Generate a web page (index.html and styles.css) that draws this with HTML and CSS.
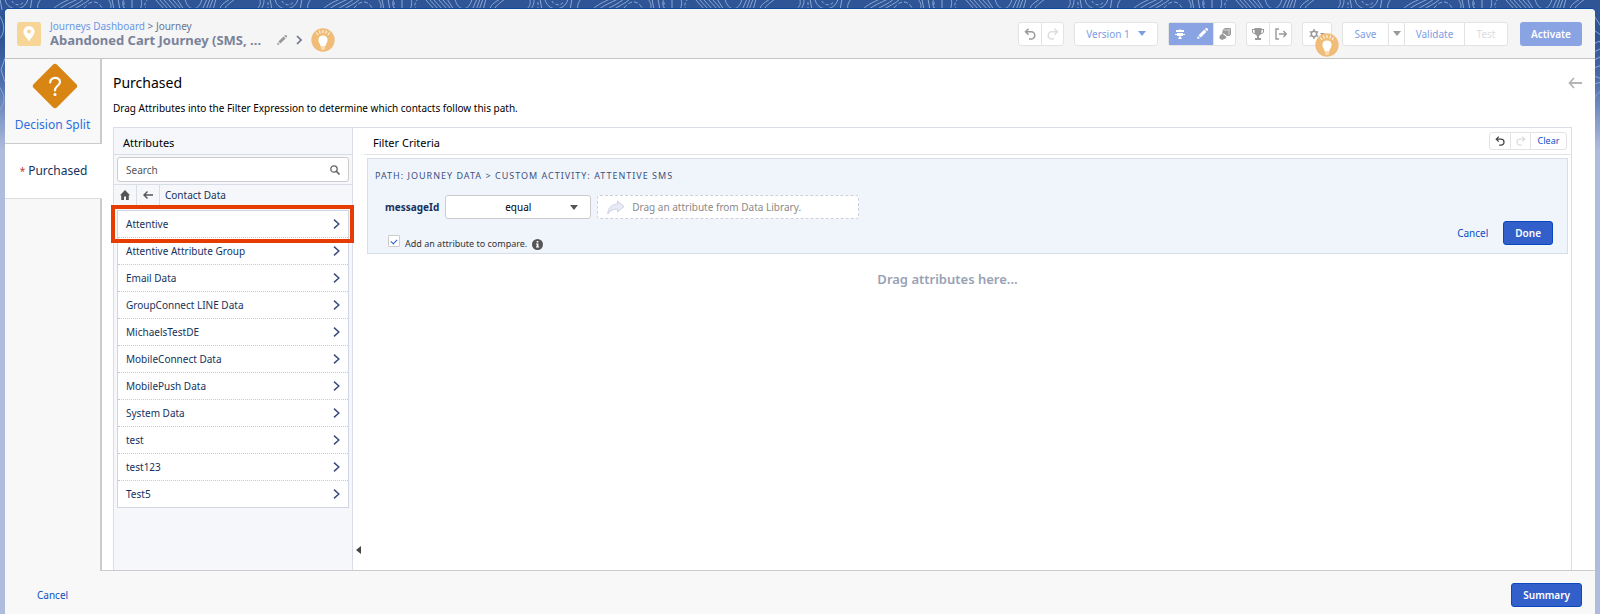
FILE: index.html
```html
<!DOCTYPE html>
<html lang="en">
<head>
  <meta charset="UTF-8">
  <title>Journey Builder</title>
  <link rel="stylesheet" href="styles.css">
</head>
<body>
<svg class="backdrop" aria-hidden="true">
  <defs>
    <pattern id="topo" x="30" width="270" height="10" patternUnits="userSpaceOnUse">
      <g fill="none" stroke="#8aa6d2" stroke-width="1">
        <path d="M0 10 2-1M8 10C7 6 8 3 11-1M22 10C28 4 34 2 40-1M28 10C34 5 40 3 48-1M36 10C42 6 48 4 54-1M43 10C48 6 55 4 60-1"/>
        <path d="M54 8C60 0 68 0 72 8" stroke-dasharray="4 2"/>
        <path d="M80 10C82 6 81 3 78-1M84 10 82-1M90 10 88-1M97 10C92 7 92 3 94-1M102 10V-1M110 10C112 5 112 2 111-1"/>
        <path d="M94 10V-1M117 10C114 6 114 3 118-1" stroke-dasharray="3 2"/>
        <path d="M125-1 135 10M129-1 139 10M133-1 143 10M138-1 148 10M142-1 152 10M147-1 154 10"/>
        <path d="M155-1C158 12 169 12 172-1M172 10 177-1M176 10 180-1M179 10 183-1M183 10 186-1"/>
        <path d="M190 10C190 5 194 3 200-1M194 10C196 5 200 3 205-1M225 10C232 6 230 2 230-1M230 10C234 6 234 2 234-1"/>
        <path d="M238 10V-1M252 1C254 6 262 6 264 1" stroke-dasharray="3 2"/>
        <path d="M245-1C247 12 265 12 268-1M242 10C241 6 241 3 240-1"/>
      </g>
    </pattern>
  </defs>
  <rect width="100%" height="10" fill="url(#topo)"/>
  <path fill="none" stroke="#8aa6d2" d="M-2 14C5 22 6 34-2 40M5 58 1 70 5 82M-2 84C2 92 8 98 0 110M-2 118C6 118 6 134-2 134"/>
  <svg x="100%" width="1" height="160" overflow="visible">
    <path fill="none" stroke="#8aa6d2" d="M-10 10C-4 18-2 22 2 28M-6 30 2 36M-6 44-1 41 2 45M-6 52 2 48M-6 60 2 56M-6 68 2 65M-6 76 2 79M-6 84 2 82M-6 100C-4 94-1 92 2 91M-6 122C-2 118-2 126 2 130"/>
  </svg>
</svg>

<div class="window">
  <header class="topbar">
    <span class="app-icon">
      <svg width="12" height="16" viewBox="0 0 12 16"><path fill="#fff" fill-rule="evenodd" d="M6 0a5.600 5.600 0 0 1 5.600 5.600C11.600 9 8 12 6 15.500 4 12 .4 9 .4 5.600A5.600 5.600 0 0 1 6 0zm0 3.600a2 2 0 1 0 0 4 2 2 0 0 0 0-4z"/></svg>
    </span>
    <div class="titles">
      <nav class="crumbs"><a href="#">Journeys Dashboard</a> &gt; Journey</nav>
      <div class="title-row">
        <h1>Abandoned Cart Journey (SMS, ...</h1>
        <button class="plain pencil" aria-label="Rename">
          <svg width="10" height="10" viewBox="0 0 10 10"><use href="#pencil"/></svg>
        </button>
        <svg width="6" height="10" viewBox="0 0 6 10"><path fill="none" stroke="#6b7590" stroke-width="1.600" d="M1 1 5 5 1 9"/></svg>
        <button class="plain" aria-label="Tips"><svg width="24" height="24" viewBox="0 0 24 24"><use href="#bulb"/></svg></button>
      </div>
    </div>

    <div class="toolbar">
      <div class="group">
        <button aria-label="Undo"><svg width="12" height="12" viewBox="0 0 12 12"><use href="#undo"/></svg></button>
        <button class="faded" aria-label="Redo"><svg class="flip" width="12" height="12" viewBox="0 0 12 12"><use href="#undo"/></svg></button>
      </div>
      <div class="group">
        <button class="version">Version 1 <span class="caret"></span></button>
      </div>
      <div class="group">
        <button class="on" aria-label="Path view"><svg width="10" height="10" viewBox="0 0 10 10"><path fill="currentColor" d="M1 1h3.500V0h1v1H9v2H1zM0 5h2V4h6v1h2v1H8v1H2V6H0zM4.500 7h1v1l1 .5V10h-3V8.500l1-.5z"/></svg></button>
        <button class="on" aria-label="Edit"><svg width="11" height="11" viewBox="0 0 10 10"><use href="#pencil"/></svg></button>
        <button aria-label="Copy"><svg width="12" height="12" viewBox="0 0 12 12"><path fill="currentColor" d="M4 1.500 6 0h6v6.500L10.500 8H8L5 5.500H3z"/><path fill="currentColor" d="m3.500 5.500 4 3.500-1 1.500L3 12 .5 10.500V8z"/><path fill="none" stroke="#fff" stroke-width=".6" d="M4.500 2H10v5.500M10 2l1.500-1.500"/></svg></button>
      </div>
      <div class="group">
        <button aria-label="Goals"><svg width="12" height="12" viewBox="0 0 12 12"><path fill="currentColor" fill-rule="evenodd" d="M2.500 0h7v1H12v2.500C12 5 10.500 6 9 6 8.500 7 7.500 7.500 7 7.700V10h2v2H3v-2h2V7.700C4.500 7.500 3.500 7 3 6 1.500 6 0 5 0 3.500V1h2.500zM1 2v1.500C1 4.500 2 5 2.700 5L2.500 2zm8.500 0-.2 3C10 5 11 4.500 11 3.500V2z"/></svg></button>
        <button aria-label="Exit criteria"><svg width="12" height="12" viewBox="0 0 12 12"><path fill="none" stroke="currentColor" stroke-width="1.400" d="M4 1H1v10h3M4 6h7M8.500 3 11.300 6 8.500 9"/></svg></button>
      </div>
      <div class="group settings">
        <button aria-label="Settings"><svg width="16" height="10" viewBox="0 0 16 10"><circle cx="5" cy="5" r="2.700" fill="none" stroke="currentColor" stroke-width="1.500"/><path stroke="currentColor" stroke-width="1.400" d="M5 0v2M5 8v2M.7 2.500l1.700 1M7.600 6.500l1.700 1M.7 7.500l1.700-1M7.600 3.500l1.700-1"/><path fill="currentColor" d="M11 4h5l-2.500 3z"/></svg></button>
        <svg class="over" width="24" height="24" viewBox="0 0 24 24"><use href="#bulb"/></svg>
      </div>
      <div class="group">
        <button class="save">Save</button>
        <button class="more" aria-label="More save options"><span class="caret"></span></button>
        <button class="validate">Validate</button>
        <button class="test" disabled>Test</button>
      </div>
      <button class="activate">Activate</button>
    </div>
  </header>

  <div class="body">
    <aside class="steps">
      <a class="step split" href="#">
        <svg width="48" height="48" viewBox="0 0 48 48"><rect x="7.500" y="7.500" width="33" height="33" rx="3" fill="#d98514" transform="rotate(45 24 24)"/><path fill="none" stroke="#fff" stroke-width="2.200" stroke-linecap="round" d="M19.200 20.500c0-6 9.800-6 9.800-.5 0 4-5 3.600-5 8.400"/><circle cx="24" cy="32.500" r="1.500" fill="#fff"/></svg>
        Decision Split
      </a>
      <a class="step current" href="#"><span class="req">*</span> Purchased</a>
    </aside>

    <main class="content">
      <div class="heading">
        <h2>Purchased</h2>
        <button class="plain" aria-label="Collapse"><svg width="14" height="12" viewBox="0 0 14 12"><path fill="none" stroke="#b5b5b5" stroke-width="1.800" d="M14 6H1.500M6 1 1.500 6 6 11"/></svg></button>
      </div>
      <p class="intro">Drag Attributes into the Filter Expression to determine which contacts follow this path.</p>

      <div class="builder">
        <section class="library">
          <h3>Attributes</h3>
          <div class="search">
            <input type="text" placeholder="Search" aria-label="Search">
            <svg width="10" height="10" viewBox="0 0 10 10"><circle cx="4" cy="4" r="3.200" fill="none" stroke="#666" stroke-width="1.300"/><path stroke="#666" stroke-width="1.600" d="m6.300 6.300 3.200 3.200"/></svg>
          </div>
          <div class="trail">
            <button aria-label="Home"><svg width="10" height="10" viewBox="0 0 10 10"><path fill="#555" d="M5 0 10 5.200H8.800V10H6V6.500H4V10H1.200V5.200H0z"/></svg></button>
            <button aria-label="Back"><svg width="10" height="8" viewBox="0 0 10 8"><path fill="none" stroke="#555" stroke-width="1.400" d="M10 4H1M4.500.6 1 4l3.500 3.400"/></svg></button>
            <span>Contact Data</span>
          </div>
          <ul class="sets">
            <li class="marked"><a href="#">Attentive <svg width="7" height="10"><use href="#next"/></svg></a></li>
            <li><a href="#">Attentive Attribute Group <svg width="7" height="10"><use href="#next"/></svg></a></li>
            <li><a href="#">Email Data <svg width="7" height="10"><use href="#next"/></svg></a></li>
            <li><a href="#">GroupConnect LINE Data <svg width="7" height="10"><use href="#next"/></svg></a></li>
            <li><a href="#">MichaelsTestDE <svg width="7" height="10"><use href="#next"/></svg></a></li>
            <li><a href="#">MobileConnect Data <svg width="7" height="10"><use href="#next"/></svg></a></li>
            <li><a href="#">MobilePush Data <svg width="7" height="10"><use href="#next"/></svg></a></li>
            <li><a href="#">System Data <svg width="7" height="10"><use href="#next"/></svg></a></li>
            <li><a href="#">test <svg width="7" height="10"><use href="#next"/></svg></a></li>
            <li><a href="#">test123 <svg width="7" height="10"><use href="#next"/></svg></a></li>
            <li><a href="#">Test5 <svg width="7" height="10"><use href="#next"/></svg></a></li>
          </ul>
        </section>

        <button class="plain splitter" aria-label="Hide attributes"><svg width="5" height="8" viewBox="0 0 5 8"><path fill="#444" d="M5 0v8L0 4z"/></svg></button>

        <section class="criteria">
          <div class="criteria-head">
            <h3>Filter Criteria</h3>
            <div class="group small">
              <button aria-label="Undo"><svg width="10" height="10" viewBox="0 0 12 12"><use href="#undo"/></svg></button>
              <button class="faded" aria-label="Redo"><svg class="flip" width="10" height="10" viewBox="0 0 12 12"><use href="#undo"/></svg></button>
              <button class="clear">Clear</button>
            </div>
          </div>
          <form class="rule">
            <div class="path">PATH: JOURNEY DATA &gt; CUSTOM ACTIVITY: ATTENTIVE SMS</div>
            <div class="compare">
              <label for="operator">messageId</label>
              <div class="pick">
                <select id="operator"><option>equal</option></select>
                <span class="caret"></span>
              </div>
              <div class="drop">
                <svg width="18" height="15" viewBox="0 0 18 15"><path fill="#e8ebf6" stroke="#ccd2e6" d="M10.500 1 17 6.500l-6.500 5.500V9C6 9 3 10.500.8 14 1 8.500 4 4.500 10.500 4z"/></svg>
                Drag an attribute from Data Library.
              </div>
            </div>
            <div class="rule-foot">
              <div class="tick">
                <input type="checkbox" id="compare" checked>
                <label for="compare">Add an attribute to compare.</label>
                <svg width="11" height="11" viewBox="0 0 11 11"><circle cx="5.500" cy="5.500" r="5.500" fill="#555"/><path fill="#fff" d="M4.700 2h1.700v1.500H4.700zM4 4.500h2.400v3h.8v1H4v-1h.7v-2H4z"/></svg>
              </div>
              <button type="button" class="link">Cancel</button>
              <button type="button" class="primary">Done</button>
            </div>
          </form>
          <p class="hint">Drag attributes here...</p>
        </section>
      </div>
    </main>
  </div>

  <footer class="bottom">
    <button class="link">Cancel</button>
    <button class="primary">Summary</button>
  </footer>
</div>

<svg class="symbols" aria-hidden="true">
  <symbol id="undo" viewBox="0 0 12 12"><path fill="none" stroke="currentColor" stroke-width="1.500" d="M4.500.8 1.500 3.800l3 3M1.500 3.800h5.700a3.500 3.500 0 0 1 0 7.200H5"/></symbol>
  <symbol id="pencil" viewBox="0 0 10 10"><path fill="currentColor" d="M0 10 .8 7.200 2.800 9.200zM1.400 6.600 6.600 1.400 8.600 3.400 3.400 8.600zM7.200.8C8-.2 9-.2 9.600.4 10.200 1 10.200 2 9.200 2.800z"/></symbol>
  <symbol id="next" viewBox="0 0 7 10"><path fill="none" stroke="#3a4d7c" stroke-width="1.500" d="M1 .6 5.800 5 1 9.400"/></symbol>
  <symbol id="bulb" viewBox="0 0 24 24"><circle cx="12" cy="12" r="11.700" fill="#f0bd78"/><path fill="#fff" d="M12 7.500c3 0 4.600 2 4.600 4.500 0 2.800-2 3.500-2.300 6.500H9.700C9.400 15.500 7.400 14.800 7.400 12c0-2.500 1.600-4.500 4.600-4.500z"/><path fill="#f8dcb4" d="M10 19h4v1.500l-1 1.500h-2l-1-1.500z"/><path stroke="#fff" d="M12 2v3M8.500 2.500l.7 3M15.500 2.500l-.7 3M5.500 4.500 7 7M18.500 4.500 17 7"/></symbol>
</svg>
</body>
</html>
```
FILE: styles.css
```css
* {
  box-sizing: border-box;
}

body {
  margin: 0;
  min-height: 100vh;
  display: flex;
  padding: 9px 5px 0;
  font-family: "Noto Sans", sans-serif;
  font-size: 10px;
  line-height: 16px;
  color: #16325c;
  background: linear-gradient(#2f5597 0, #2f5597 40px, #4a6dac 80px, #b0bcde 150px);
}

h1, h2, h3, p, ul {
  margin: 0;
  padding: 0;
  font-weight: 400;
}

a {
  color: inherit;
  text-decoration: none;
}

button {
  font: inherit;
  color: inherit;
  padding: 0;
  border: 0;
  background: none;
}

svg {
  display: block;
  flex: none;
}

.backdrop {
  position: absolute;
  top: 0;
  left: 0;
  width: 100%;
  height: 160px;
}

.symbols {
  position: absolute;
  width: 0;
  height: 0;
}

.window {
  position: relative;
  flex: 1;
  min-width: 0;
  display: flex;
  flex-direction: column;
  background: #f8f8f8;
  border-radius: 4px 4px 0 0;
  box-shadow: 0 -1px #0b4a9c;
}

.topbar {
  display: flex;
  align-items: center;
  height: 50px;
  padding: 0 13px 0 12px;
  background: #f5f5f5;
  border-bottom: 1px solid #c4c4c4;
  border-radius: 4px 4px 0 0;
}

.app-icon {
  display: grid;
  place-items: center;
  width: 24px;
  height: 24px;
  border-radius: 3px;
  background: #f6d597;
}

.titles {
  margin-left: 9px;
  padding-bottom: 2px;
  line-height: 14px;
  color: #6b7590;
}

.crumbs a {
  color: #6b97e6;
}

.title-row {
  display: flex;
  align-items: center;
  gap: 9px;
  height: 14px;
}

h1 {
  font-size: 13px;
  font-weight: 700;
  color: #7a829a;
}

.pencil {
  margin-left: 7px;
  color: #999;
}

.toolbar {
  display: flex;
  gap: 10px;
  margin-left: auto;
  color: #999;
}

.group {
  display: flex;
  border: 1px solid #e3e3e3;
  border-radius: 3px;
  background: #fff;
}

.group button {
  display: flex;
  align-items: center;
  justify-content: center;
  gap: 8px;
  width: 22px;
  height: 22px;
}

.group button + button {
  border-left: 1px solid #e3e3e3;
}

.group .on,
.group .on + .on {
  color: #fff;
  background: #8aa4e3;
  border-color: #8aa4e3;
}

.group .faded {
  color: #ddd;
}

.flip {
  transform: scaleX(-1);
}

.caret {
  border: 4px solid transparent;
  border-top: 5px solid;
  border-bottom: 0;
}

.group .version,
.group .save,
.group .validate {
  color: #7d9de3;
}

.group .version {
  width: 82px;
}

.settings {
  position: relative;
}

.group .save {
  width: 45px;
}

.group .more {
  width: 16px;
}

.group .validate {
  width: 60px;
}

.group .test {
  width: 43px;
  color: #ddd;
}

.settings button {
  width: 28px;
}

.over {
  position: absolute;
  top: 10px;
  left: 12px;
}

.activate {
  width: 62px;
  margin-left: 2px;
  border-radius: 3px;
  font-weight: 600;
  color: #fff;
  background: #8aa4e3;
}

.body {
  flex: 1;
  display: flex;
}

.steps {
  width: 97px;
  border-right: 2px solid #ccc;
}

.step {
  display: flex;
  align-items: center;
  justify-content: center;
  margin-right: -2px;
  font-size: 12px;
}

.split {
  flex-direction: column;
  gap: 7px;
  height: 85px;
  padding-bottom: 8px;
  color: #2a6fe0;
  border-right: 2px solid #ccc;
  border-bottom: 1px solid #ccc;
}

.split svg {
  margin-left: 4px;
}

.current {
  gap: 3px;
  height: 55px;
  background: #fff;
  border-bottom: 1px solid #ddd;
}

.req {
  font-size: 10px;
  color: #c23934;
}

.content {
  flex: 1;
  min-width: 0;
  display: flex;
  flex-direction: column;
  padding: 16px 23px 0 11px;
  color: #000;
  background: #fff;
  border-bottom: 1px solid #ccc;
}

.heading {
  display: flex;
  align-items: center;
  justify-content: space-between;
  margin-right: -10px;
}

h2 {
  font-size: 14px;
}

.intro {
  margin-top: 9px;
}

.builder {
  flex: 1;
  display: flex;
  margin-top: 11px;
  border: 1px solid #d8dde6;
  border-bottom: 0;
}

.library {
  width: 239px;
  background: #f5f7fa;
  border-right: 1px solid #d8dde6;
}

h3 {
  font-size: 11px;
}

.library h3 {
  height: 27px;
  padding: 7px 9px 0;
  border-bottom: 1px solid #d8dde6;
}

.search {
  display: flex;
  align-items: center;
  height: 25px;
  margin: 2px 3px;
  padding: 0 8px;
  background: #fff;
  border: 1px solid #ccc;
  border-radius: 3px;
}

.search input {
  flex: 1;
  min-width: 0;
  padding: 0;
  border: 0;
  outline: 0;
  font: inherit;
  background: none;
}

.search input::placeholder {
  color: #555;
}

.trail {
  display: flex;
  align-items: center;
  height: 21px;
  color: #16325c;
  border-top: 1px solid #d8dde6;
}

.trail button {
  display: grid;
  place-items: center;
  width: 23px;
  height: 20px;
  border-right: 1px solid #d8dde6;
}

.trail span {
  margin-left: 5px;
}

.sets {
  margin: 5px 3px;
  list-style: none;
  background: #fff;
  border: 1px solid #d0d4e4;
}

.sets li {
  position: relative;
  border-bottom: 1px dotted #c4c9d4;
}

.sets li:last-child {
  border-bottom: 0;
}

.sets a {
  display: flex;
  align-items: center;
  justify-content: space-between;
  height: 26px;
  padding: 0 8px;
  color: #16325c;
}

/* highlight frame drawn over the list */
.marked::before {
  content: "";
  position: absolute;
  inset: -6px -6px -6px -7px;
  border: 4px solid #e63c00;
  pointer-events: none;
}

.splitter {
  align-self: flex-end;
  width: 11px;
  padding: 0 3px 16px;
}

.criteria {
  flex: 1;
  min-width: 0;
}

.criteria-head {
  display: flex;
  align-items: center;
  justify-content: space-between;
  height: 27px;
  padding: 0 4px 0 9px;
  border-bottom: 1px solid #e0e3ea;
}

.criteria h3 {
  padding-top: 3px;
}

.small {
  color: #444;
}

.group.small button {
  width: 20px;
  height: 16px;
}

.group.small .clear {
  width: 36px;
  font-size: 9px;
  color: #0b4fc4;
}

.rule {
  margin: 3px 3px 0;
  padding: 9px 14px 0 7px;
  background: #f0f5fc;
  border: 1px solid #d8dde6;
}

.path {
  font-size: 9px;
  color: #3c5080;
  letter-spacing: 1px;
}

.compare {
  display: flex;
  align-items: center;
  gap: 6px;
  margin-top: 11px;
  padding-left: 10px;
}

.compare label {
  font-weight: 700;
  color: #16325c;
}

.pick {
  position: relative;
}

.pick select {
  appearance: none;
  width: 146px;
  height: 24px;
  padding: 0 8px;
  font: inherit;
  text-align: center;
  text-align-last: center;
  color: #000;
  background: #fff;
  border: 1px solid #ccc;
  border-radius: 3px;
}

.pick .caret {
  position: absolute;
  top: 10px;
  right: 13px;
  color: #555;
  pointer-events: none;
}

.drop {
  display: flex;
  align-items: center;
  gap: 7px;
  width: 262px;
  height: 24px;
  padding: 0 9px;
  color: #8a8a8a;
  background: #fff;
  border: 1px dashed #ccd0dc;
  border-radius: 3px;
}

.rule-foot {
  display: flex;
  align-items: flex-start;
  gap: 15px;
  margin-top: 2px;
}

.tick {
  display: flex;
  align-items: center;
  gap: 5px;
  margin: 14px auto 0 13px;
  font-size: 9px;
  color: #333;
}

.tick input {
  appearance: none;
  width: 12px;
  height: 12px;
  margin: 0 0 6px;
  display: grid;
  place-items: center;
  background: #fff;
  border: 1px solid #ccc;
  border-radius: 1px;
}

.tick input:checked::before {
  content: "";
  width: 5px;
  height: 3px;
  border: solid #2a62d0;
  border-width: 0 0 1px 1px;
  transform: rotate(-45deg);
}

.link {
  height: 24px;
  color: #0b4fc4;
}

.primary {
  height: 24px;
  padding: 0 11px;
  border: 1px solid #0b48c0;
  border-radius: 3px;
  font-weight: 600;
  color: #fff;
  background: #335fca;
}

.hint {
  margin-top: 17px;
  padding-right: 40px;
  text-align: center;
  font-size: 13px;
  font-weight: 600;
  color: #98a1b3;
}

.bottom {
  display: flex;
  align-items: center;
  justify-content: space-between;
  height: 43px;
  padding: 5px 13px 0 32px;
}
```
